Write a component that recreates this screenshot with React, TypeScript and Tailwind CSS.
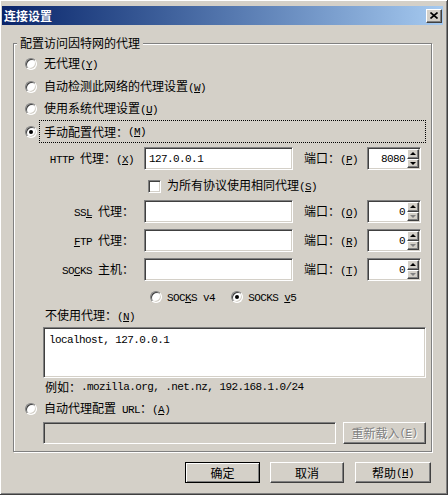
import React from "react";

const sunken =
  "border border-t-[#808080] border-l-[#808080] border-r-white border-b-white shadow-[inset_1px_1px_0_#404040,inset_-1px_-1px_0_#d4d0c8]";
const raised =
  "border border-t-white border-l-white border-r-[#404040] border-b-[#404040] shadow-[inset_-1px_-1px_0_#808080,inset_1px_1px_0_#d4d0c8]";
const mono = "font-['Liberation_Mono',monospace] text-[11px] tracking-[-0.6px] whitespace-pre";

// "&" marks the mnemonic letter; ascii runs are drawn in a half-width mono font
function Txt({ t }: { t: string }) {
  const runs: { ascii: boolean; chars: { c: string; u: boolean }[] }[] = [];
  let ul = false;
  for (const c of t) {
    if (c === "&") {
      ul = true;
      continue;
    }
    const ascii = c.charCodeAt(0) < 128;
    const last = runs[runs.length - 1];
    if (last && last.ascii === ascii) last.chars.push({ c, u: ul });
    else runs.push({ ascii, chars: [{ c, u: ul }] });
    ul = false;
  }
  return (
    <>
      {runs.map((r, i) =>
        r.ascii ? (
          <span key={i} className={mono}>
            {r.chars.map((x, j) => (x.u ? <u key={j} className="underline-offset-[1px]">{x.c}</u> : x.c))}
          </span>
        ) : (
          <span key={i}>{r.chars.map((x) => x.c).join("")}</span>
        )
      )}
    </>
  );
}

function Radio({ on }: { on?: boolean }) {
  return (
    <span className="w-[12px] h-[12px] rounded-full bg-white border border-t-[#808080] border-l-[#808080] border-r-white border-b-white shadow-[inset_1px_1px_0_#404040,inset_-1px_-1px_0_#d4d0c8] flex items-center justify-center shrink-0">
      {on && <span className="w-[4px] h-[4px] rounded-full bg-black" />}
    </span>
  );
}

function Check() {
  return <span className={`w-[13px] h-[13px] bg-white shrink-0 ${sunken}`} />;
}

function SpinBtn({ up, off }: { up?: boolean; off?: boolean }) {
  const c = off ? "border-b-[#808080] border-t-[#808080]" : "border-b-black border-t-black";
  return (
    <div className={`flex-1 bg-[#d4d0c8] flex items-center justify-center ${raised}`}>
      <span
        className={`w-0 h-0 border-x-[3px] border-x-transparent ${c} ${
          up ? "border-b-[3px] border-t-0" : "border-t-[3px] border-b-0"
        }`}
      />
    </div>
  );
}

function Spin({ v, off }: { v: string; off?: boolean }) {
  return (
    <div className={`w-[54px] h-[23px] bg-white flex p-[1px] ${sunken}`}>
      <div className="flex-1 flex items-center justify-end pr-[2px]">
        <Txt t={v} />
      </div>
      <div className="w-[12px] flex flex-col">
        <SpinBtn up />
        <SpinBtn off={off} />
      </div>
    </div>
  );
}

function ProxyRow({ label, port, text, first }: { label: string; port: string; text?: string; first?: boolean }) {
  return (
    <div className={`flex items-center h-[23px] ${first ? "mt-[4px]" : "mt-[6px]"}`}>
      <div className="w-[120px] text-right whitespace-nowrap">
        <Txt t={label} />
      </div>
      <div className={`ml-[10px] w-[149px] h-[23px] bg-white flex items-center pl-[4px] ${sunken}`}>
        {text && <Txt t={text} />}
      </div>
      <div className="ml-[11px] w-[54px] whitespace-nowrap">
        <Txt t={port} />
      </div>
      <div className="ml-[9px]">
        <Spin v={first ? "8080" : "0"} off={!first} />
      </div>
    </div>
  );
}

export default function App() {
  return (
    <div className="w-[448px] h-[495px] bg-[#d4d0c8] pl-[2px] pt-[6px] border-r border-b border-[#404040] shadow-[inset_1px_1px_0_#fff,inset_-1px_-1px_0_#808080] font-['Noto_Sans_CJK_SC',sans-serif] text-[12px] leading-[14px] text-black overflow-hidden">
      {/* title bar */}
      <div className="w-[441px] h-[19px] bg-linear-to-r from-[#0a246a] to-[#a6caf0] flex items-center pl-[2px] pr-[1px]">
        <span className="text-white font-bold">连接设置</span>
        <div className={`ml-auto w-[16px] h-[14px] bg-[#d4d0c8] flex items-center justify-center ${raised}`}>
          <svg width="8" height="7" viewBox="0 0 8 7">
            <path d="M0.5 0.5 L7.5 6.5 M7.5 0.5 L0.5 6.5" stroke="#000" strokeWidth="1.6" />
          </svg>
        </div>
      </div>

      {/* group box */}
      <div className="ml-[11px] mt-[18px] w-[419px] h-[409px] border border-[#808080] shadow-[inset_1px_1px_0_#fff,1px_1px_0_#fff] flex flex-col">
        <div className="-mt-[9px] ml-[3px] px-[3px] self-start bg-[#d4d0c8] leading-[16px]">配置访问因特网的代理</div>

        <div className="flex items-center h-[22px] mt-[2px] pl-[11px] gap-[7px]">
          <Radio />
          <span className="whitespace-nowrap"><Txt t="无代理(&Y)" /></span>
        </div>
        <div className="flex items-center h-[23px] pl-[11px] gap-[7px]">
          <Radio />
          <span className="whitespace-nowrap"><Txt t="自动检测此网络的代理设置(&W)" /></span>
        </div>
        <div className="flex items-center h-[22px] pl-[11px] gap-[7px]">
          <Radio />
          <span className="whitespace-nowrap"><Txt t="使用系统代理设置(&U)" /></span>
        </div>
        <div className="flex items-center h-[23px] pl-[11px]">
          <Radio on />
          <div className="ml-[2px] mr-[5px] flex-1 h-full border border-dotted border-black flex items-center pl-[4px] whitespace-nowrap">
            <Txt t="手动配置代理：(&M)" />
          </div>
        </div>

        <ProxyRow first label="HTTP 代理：(&X)" port="端口：(&P)" text="127.0.0.1" />

        <div className="flex items-center h-[30px] pt-[2px] pl-[134px] gap-[6px]">
          <Check />
          <span className="whitespace-nowrap"><Txt t="为所有协议使用相同代理(&S)" /></span>
        </div>

        <div className="-mt-[6px]">
          <ProxyRow label="SS&L 代理：" port="端口：(&O)" />
        </div>
        <ProxyRow label="&FTP 代理：" port="端口：(&R)" />
        <ProxyRow label="SO&CKS 主机：" port="端口：(&T)" />

        <div className="flex items-center h-[22px] mt-[5px] pl-[136px]">
          <Radio />
          <span className="ml-[5px] whitespace-nowrap"><Txt t="SOC&KS v4" /></span>
          <span className="ml-[16px]"><Radio on /></span>
          <span className="ml-[5px] whitespace-nowrap"><Txt t="SOCKS &v5" /></span>
        </div>

        <div className="h-[14px] pl-[31px] whitespace-nowrap"><Txt t="不使用代理：(&N)" /></div>
        <div className={`ml-[29px] mt-[5px] w-[383px] h-[51px] bg-white pt-[3px] pl-[5px] ${sunken}`}>
          <Txt t="localhost, 127.0.0.1" />
        </div>
        <div className="h-[18px] pl-[31px] flex items-center whitespace-nowrap">
          <Txt t="例如：.mozilla.org, .net.nz, 192.168.1.0/24" />
        </div>

        <div className="flex items-center h-[22px] mt-[2px] pl-[11px] gap-[7px]">
          <Radio />
          <span className="whitespace-nowrap"><Txt t="自动代理配置 URL：(&A)" /></span>
        </div>
        <div className="flex items-center h-[22px] mt-[2px] pl-[29px]">
          <div className={`w-[293px] h-[22px] bg-[#d4d0c8] ${sunken}`} />
          <div className={`ml-[7px] w-[83px] h-[22px] flex items-center justify-center text-[#808080] [text-shadow:1px_1px_0_#fff] whitespace-nowrap ${raised}`}>
            <Txt t="重新载入(&E)" />
          </div>
        </div>
      </div>

      {/* dialog buttons */}
      <div className="flex mt-[10px] ml-[183px] h-[21px]">
        <div className="w-[75px] h-full flex items-center justify-center border border-black shadow-[inset_1px_1px_0_#fff,inset_-1px_-1px_0_#808080]">
          确定
        </div>
        <div className={`ml-[10px] w-[74px] h-full flex items-center justify-center ${raised}`}>取消</div>
        <div className={`ml-[11px] w-[76px] h-full flex items-center justify-center whitespace-nowrap ${raised}`}>
          <Txt t="帮助(&H)" />
        </div>
      </div>
    </div>
  );
}
